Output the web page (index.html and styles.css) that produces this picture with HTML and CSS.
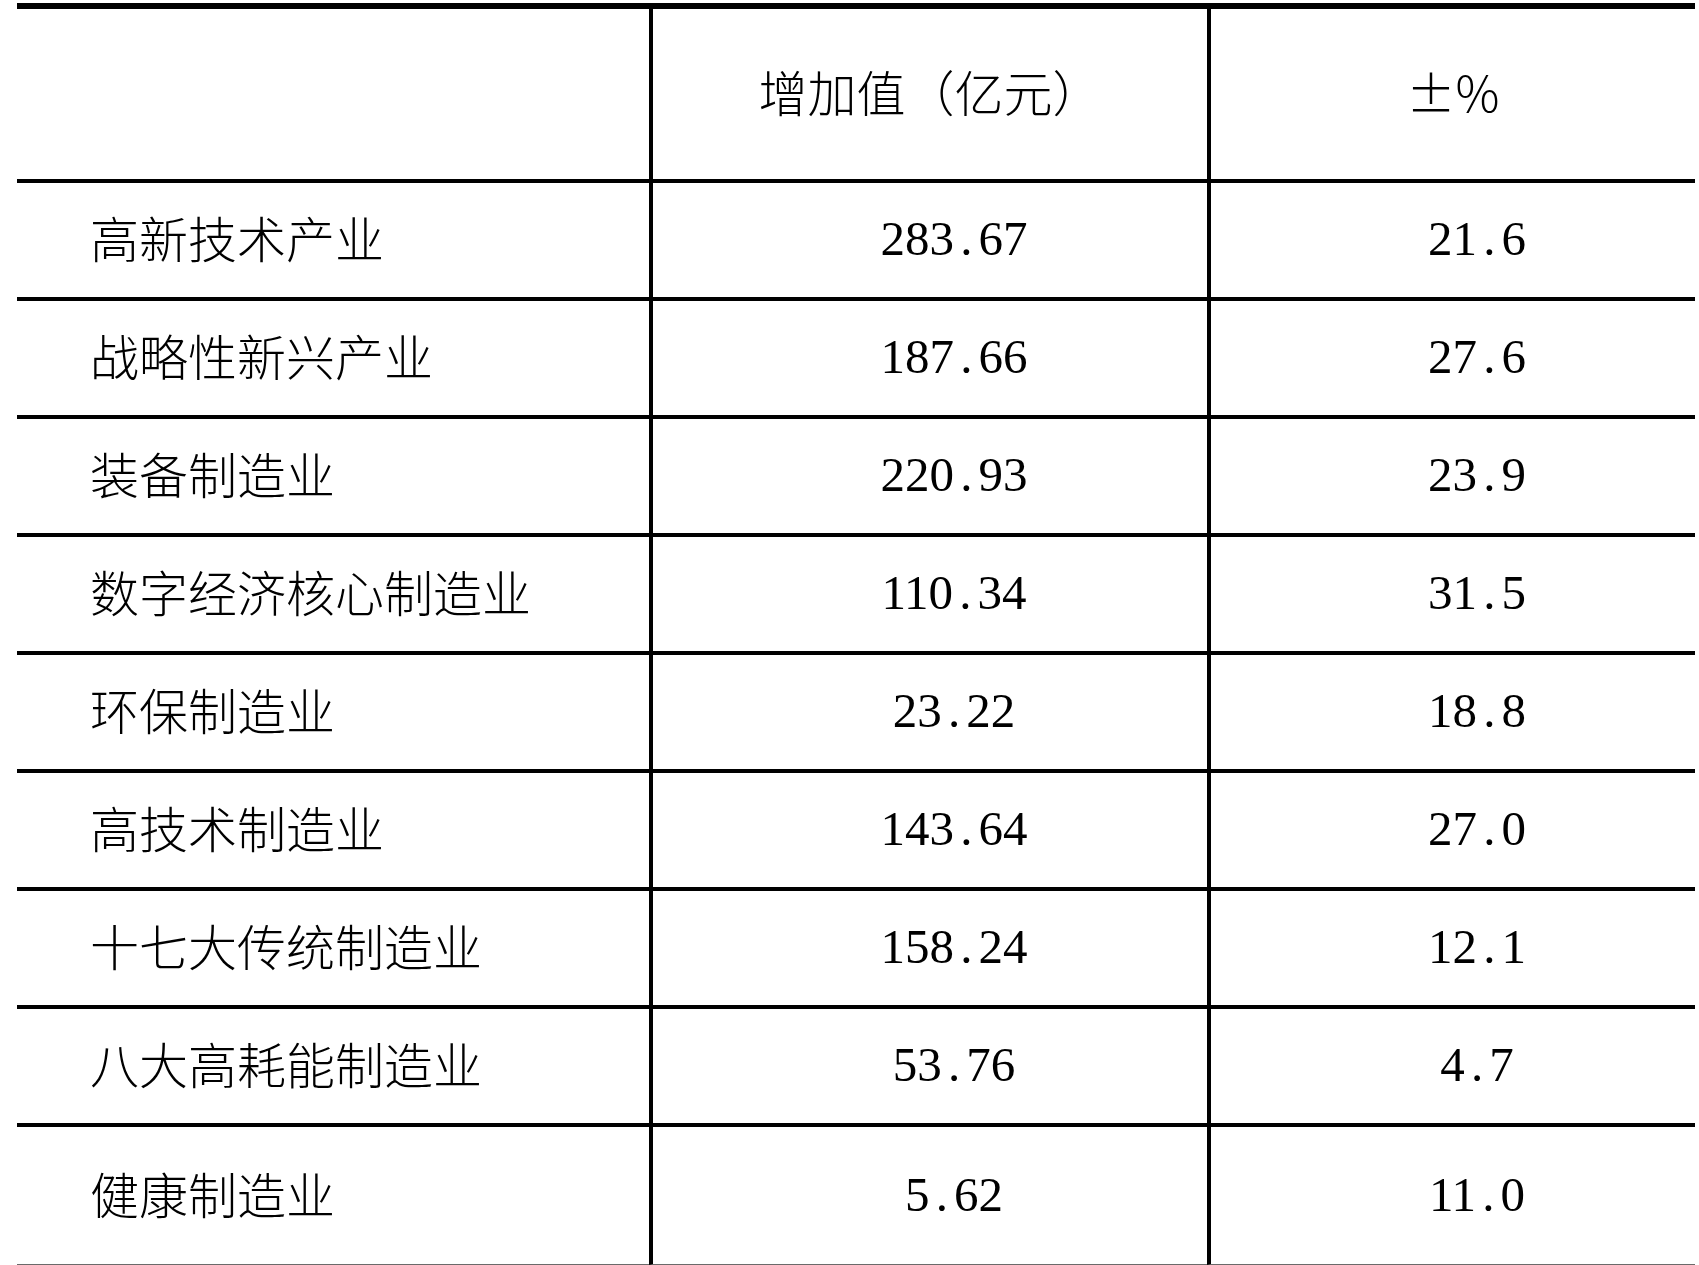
FILE: index.html
```html
<!DOCTYPE html>
<html lang="zh-CN">
<head>
<meta charset="utf-8">
<title>增加值</title>
<link rel="stylesheet" href="styles.css">
</head>
<body>
<div class="sheet">
  <div class="cell head name"></div>
  <div class="cell head col">增加值（亿元）</div>
  <div class="cell head col">±%</div>

  <div class="cell name">高新技术产业</div>
  <div class="cell col num">283<span class="dot">.</span>67</div>
  <div class="cell col num">21<span class="dot">.</span>6</div>

  <div class="cell name">战略性新兴产业</div>
  <div class="cell col num">187<span class="dot">.</span>66</div>
  <div class="cell col num">27<span class="dot">.</span>6</div>

  <div class="cell name">装备制造业</div>
  <div class="cell col num">220<span class="dot">.</span>93</div>
  <div class="cell col num">23<span class="dot">.</span>9</div>

  <div class="cell name">数字经济核心制造业</div>
  <div class="cell col num">110<span class="dot">.</span>34</div>
  <div class="cell col num">31<span class="dot">.</span>5</div>

  <div class="cell name">环保制造业</div>
  <div class="cell col num">23<span class="dot">.</span>22</div>
  <div class="cell col num">18<span class="dot">.</span>8</div>

  <div class="cell name">高技术制造业</div>
  <div class="cell col num">143<span class="dot">.</span>64</div>
  <div class="cell col num">27<span class="dot">.</span>0</div>

  <div class="cell name">十七大传统制造业</div>
  <div class="cell col num">158<span class="dot">.</span>24</div>
  <div class="cell col num">12<span class="dot">.</span>1</div>

  <div class="cell name">八大高耗能制造业</div>
  <div class="cell col num">53<span class="dot">.</span>76</div>
  <div class="cell col num">4<span class="dot">.</span>7</div>

  <div class="cell name last">健康制造业</div>
  <div class="cell col num last">5<span class="dot">.</span>62</div>
  <div class="cell col num last">11<span class="dot">.</span>0</div>
</div>
</body>
</html>
```

FILE: styles.css
```css
html, body {
  margin: 0;
  padding: 0;
  background: #ffffff;
}

body {
  color: #000000;
  font-family: "Noto Sans CJK SC", "Liberation Serif", serif;
  font-weight: 300;
  font-size: 49px;
  overflow: hidden;
}

.sheet {
  margin: 3px 0 0 17px;
  width: 1678px;
  border-top: 6px solid #000000;
  display: grid;
  grid-template-columns: 632px 558px 488px;
  grid-template-rows: 174px repeat(8, 118px) 138px;
}

.cell {
  box-sizing: border-box;
  display: flex;
  align-items: center;
  border-bottom: 4px solid #000000;
  white-space: nowrap;
  line-height: 1;
  padding-bottom: 7px;
}

.name {
  justify-content: flex-start;
  padding-left: 73px;
}

.col {
  justify-content: center;
  border-left: 4px solid #000000;
}

.num {
  padding-left: 48px;
  padding-bottom: 3px;
  font-family: "Liberation Serif", serif;
  font-weight: 400;
}

.dot {
  display: inline-block;
  width: 0.5em;
  text-align: center;
}

.last {
  border-bottom: 1px solid #6a6a6a;
}
```
